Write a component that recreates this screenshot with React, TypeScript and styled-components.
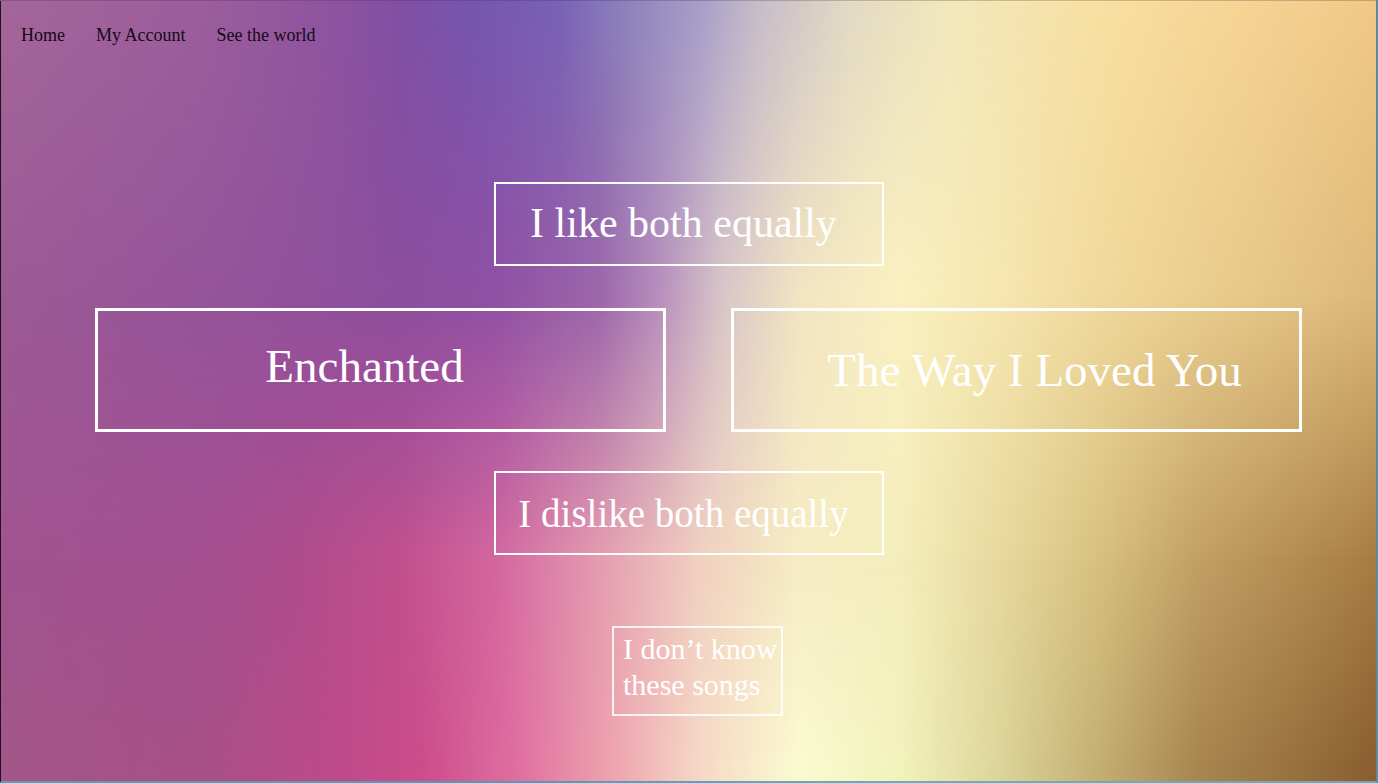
import React from "react";
import styled, { createGlobalStyle } from "styled-components";

const GlobalStyle = createGlobalStyle`
  html, body { margin: 0; padding: 0; }
  body { font-family: "Liberation Serif", "Times New Roman", serif; }
  * { box-sizing: border-box; }
`;

const TOP = `#a4669a 0%, #9c5e9c 14.5%, #8e54a0 24%, #8050a4 29%, #7656ae 34%, #7862b6 40.6%, #8a80bc 45%, #a69ec8 50.8%, #c6bcca 55%, #e2dac4 61.7%, #f2e8bc 69%, #f8e0a2 80%, #f6d494 90.7%, #f2c886 100%`;
const MID = `#9c5a94 0%, #96549a 14.5%, #8c4e9e 29%, #9050a4 36%, #9c66aa 43.5%, #b890bc 48%, #d8c4c8 52.3%, #f2e4c2 58%, #faf0c0 65.3%, #f6e6b0 72.6%, #f0d89c 80%, #e6c888 90.7%, #dcb878 100%`;
const LOW = `#a05490 0%, #a45090 14.5%, #b04c8c 21.8%, #c0508e 29%, #d468a0 36.3%, #e49cb0 43.5%, #f0d0c0 50.8%, #f6ecc4 58%, #f4eebc 65.3%, #e8d89e 72.6%, #d6c080 80%, #c2a066 87%, #a87c44 100%`;
const BOTTOM = `#a25688 0%, #a85088 14.5%, #bc4a8a 24%, #cc4c8c 30.5%, #e070a0 37.7%, #eea8b0 45%, #f6d8c6 50.8%, #fafad0 58%, #f2f2bc 65.3%, #dcd49a 72.6%, #c4ae72 79.8%, #a88650 87%, #8a5e30 100%`;

const Page = styled.div`
  width: 100vw;
  height: 100vh;
  display: grid;
  grid-template: 1fr / 1fr;
  overflow: hidden;
  border-left: 1px solid #1e1420;
  border-top: 1px solid rgba(70, 40, 60, 0.25);
  border-right: 2px solid rgba(70, 150, 160, 0.75);
  border-bottom: 2px solid rgba(80, 165, 190, 0.85);
  background: linear-gradient(to right, ${TOP});
`;

const Wash = styled.div<{ $stops: string; $from: string; $to: string }>`
  grid-area: 1 / 1;
  background: linear-gradient(to right, ${(p) => p.$stops});
  -webkit-mask-image: linear-gradient(to bottom, transparent ${(p) => p.$from}, #000 ${(p) => p.$to});
  mask-image: linear-gradient(to bottom, transparent ${(p) => p.$from}, #000 ${(p) => p.$to});
`;

const Content = styled.div`
  grid-area: 1 / 1;
  z-index: 1;
  display: flex;
  flex-direction: column;
  align-items: center;
`;

const Nav = styled.nav`
  align-self: stretch;
  display: flex;
  gap: 31px;
  padding: 24px 0 0 20px;
  font-size: 18px;
`;

const NavLink = styled.a`
  color: #140a18;
  text-decoration: none;
  cursor: pointer;
`;

const Row = styled.div`
  display: flex;
  gap: 65px;
  margin-top: 42px;
  margin-left: 20px;
`;

const Choice = styled.button<{
  $w: number;
  $h: number;
  $size: number;
  $bw: number;
  $pad?: string;
  $mt?: number;
  $ml?: number;
}>`
  width: ${(p) => p.$w}px;
  height: ${(p) => p.$h}px;
  margin-top: ${(p) => p.$mt ?? 0}px;
  margin-left: ${(p) => p.$ml ?? 0}px;
  padding: ${(p) => p.$pad ?? "0"};
  border: ${(p) => p.$bw}px solid #ffffff;
  background: transparent;
  color: #ffffff;
  font-family: "Liberation Serif", "Times New Roman", serif;
  font-size: ${(p) => p.$size}px;
  display: flex;
  align-items: center;
  justify-content: center;
  white-space: nowrap;
  cursor: pointer;
`;

const SmallChoice = styled.button`
  width: 171px;
  height: 90px;
  margin-top: 71px;
  margin-left: 18px;
  padding: 3px 0 0 9px;
  border: 2px solid rgba(255, 255, 255, 0.85);
  background: transparent;
  color: #ffffff;
  font-family: "Liberation Serif", "Times New Roman", serif;
  font-size: 30px;
  line-height: 36px;
  text-align: left;
  display: flex;
  align-items: flex-start;
  justify-content: flex-start;
  cursor: pointer;
`;

export default function App() {
  return (
    <>
      <GlobalStyle />
      <Page>
        <Wash $stops={MID} $from="0%" $to="38%" />
        <Wash $stops={LOW} $from="38%" $to="71.5%" />
        <Wash $stops={BOTTOM} $from="71.5%" $to="98%" />
        <Content>
          <Nav>
            <NavLink>Home</NavLink>
            <NavLink>My Account</NavLink>
            <NavLink>See the world</NavLink>
          </Nav>
          <Choice $w={390} $h={84} $size={42} $bw={2} $pad="0 10px 2px 0" $mt={136}>
            I like both equally
          </Choice>
          <Row>
            <Choice $w={571} $h={124} $size={47} $bw={3} $pad="0 32px 8px 0">
              Enchanted
            </Choice>
            <Choice $w={571} $h={124} $size={47} $bw={3} $pad="0 0 0 36px">
              The Way I Loved You
            </Choice>
          </Row>
          <Choice $w={390} $h={84} $size={39} $bw={2} $pad="0 10px 0 0" $mt={39}>
            I dislike both equally
          </Choice>
          <SmallChoice>I don’t know these songs</SmallChoice>
        </Content>
      </Page>
    </>
  );
}
